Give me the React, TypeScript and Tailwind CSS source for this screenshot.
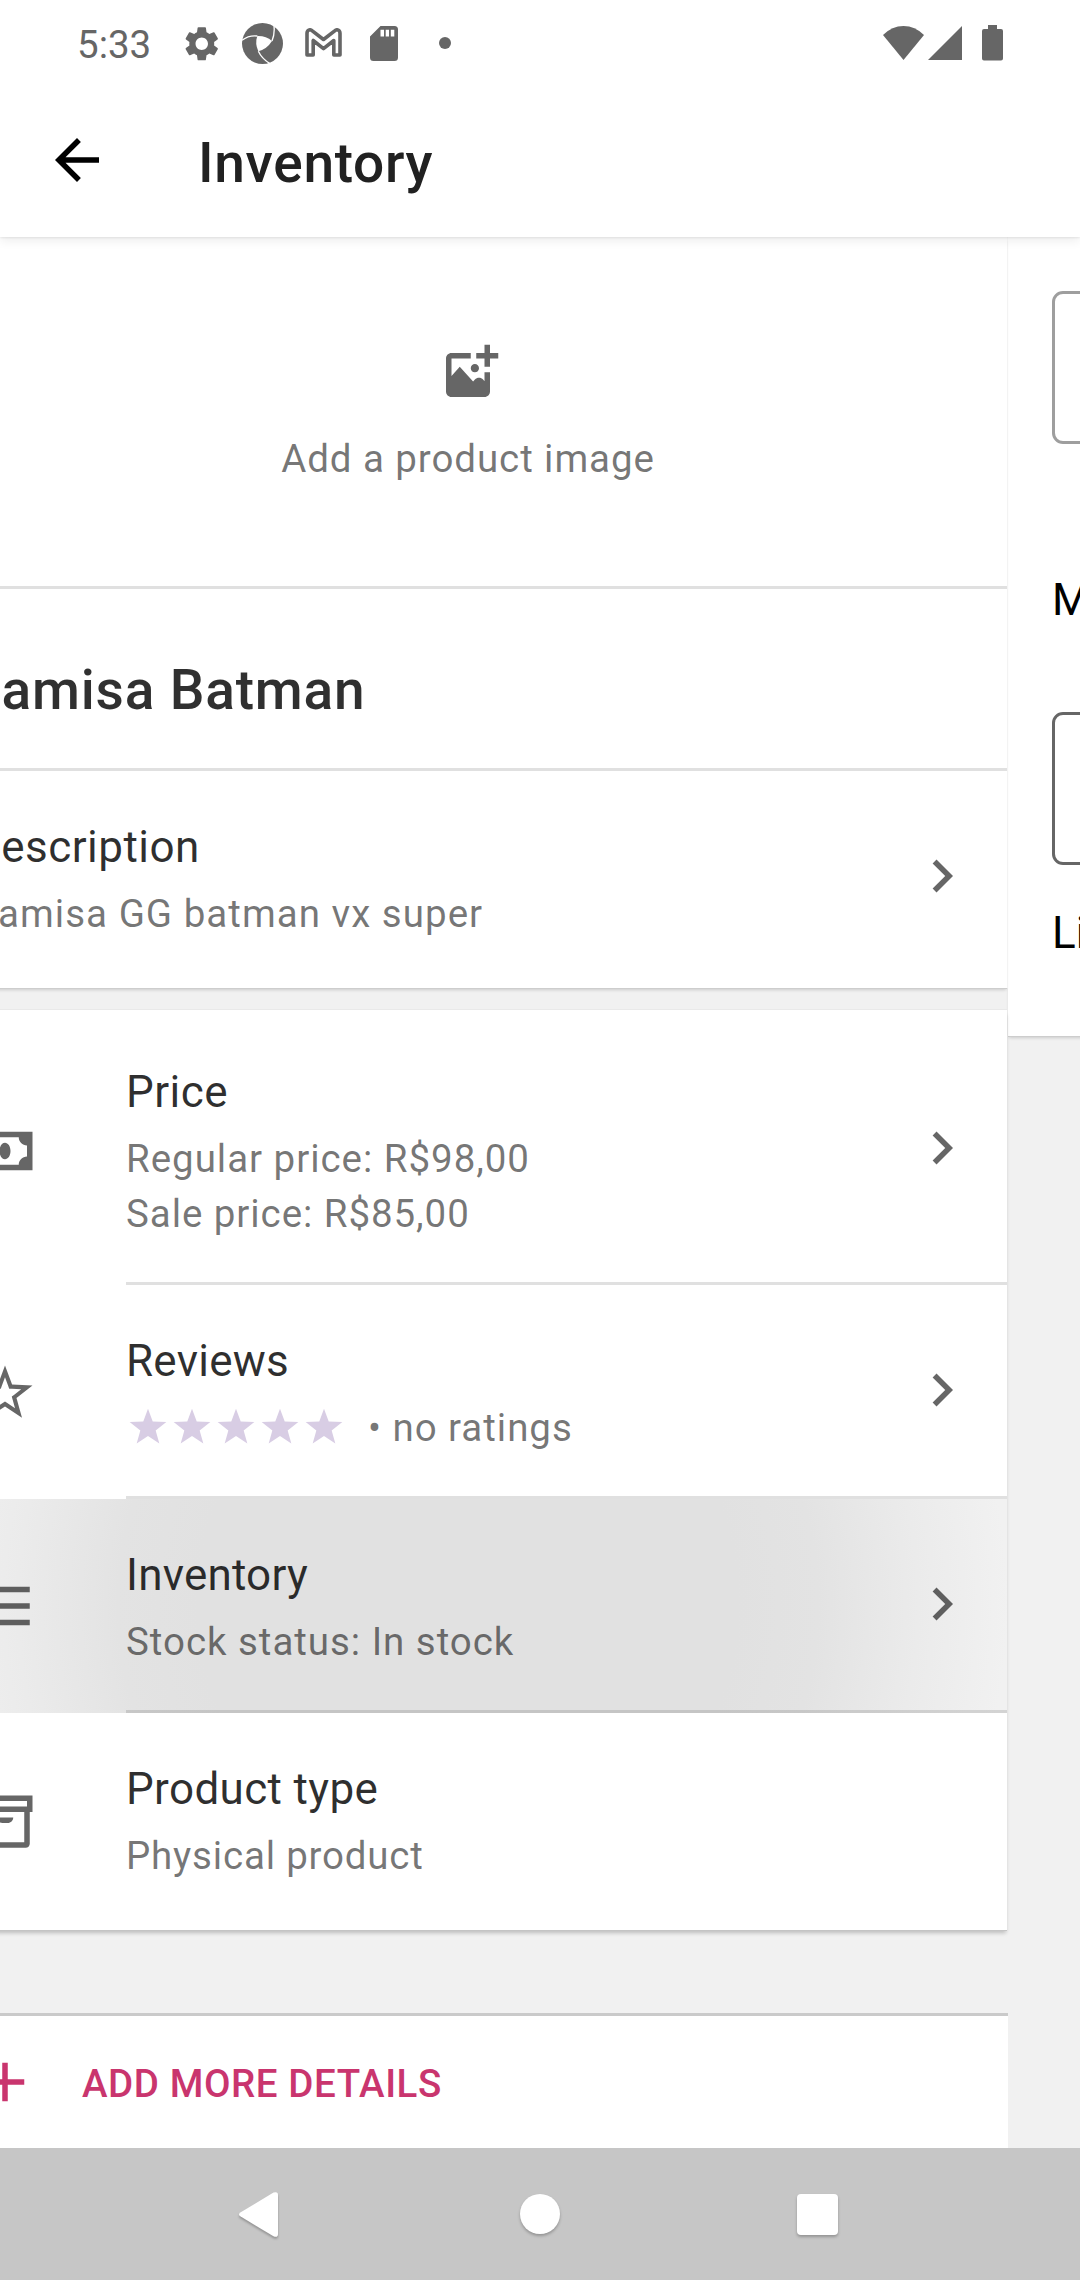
import type { ReactNode } from "react";
import { MdSettings } from "react-icons/md";

type IconProps = { d: string; className?: string };

const PATHS = {
  back: "M20 11H7.83l5.59-5.59L12 4l-8 8 8 8 1.41-1.41L7.83 13H20v-2z",
  chevron: "M10 6L8.59 7.41 13.17 12l-4.58 4.59L10 18l6-6z",
  addImage:
    "M23 4v2h-3v3h-2V6h-3V4h3V1h2v3h3zm-8.5 7c.828 0 1.5-.672 1.5-1.5S15.328 8 14.5 8 13 8.672 13 9.5s.672 1.5 1.5 1.5zm3.5 3.234l-.513-.57c-.794-.885-2.18-.885-2.976 0l-.655.73L9 9l-3 3.333V6h7V4H6c-1.105 0-2 .895-2 2v12c0 1.105.895 2 2 2h12c1.105 0 2-.895 2-2v-7h-2v3.234z",
  money:
    "M2 5v14h20V5H2zm5 12c0-1.657-1.343-3-3-3v-4c1.657 0 3-1.343 3-3h10c0 1.657 1.343 3 3 3v4c-1.657 0-3 1.343-3 3H7zm5-8c1.1 0 2 1.3 2 3s-.9 3-2 3-2-1.3-2-3 .9-3 2-3z",
  starOutline:
    "M12 6.308l1.176 3.167.347.936.997.042 3.374.14-2.647 2.09-.784.62.27.963.91 3.25-2.813-1.872-.83-.553-.83.552-2.814 1.87.91-3.248.27-.962-.783-.62-2.648-2.092 3.374-.14.996-.04.347-.936L12 6.308M12 2L9.418 8.953 2 9.257l5.822 4.602L5.82 21 12 16.89 18.18 21l-2.002-7.14L22 9.256l-7.418-.304L12 2z",
  star: "M12 2l2.582 6.953L22 9.257l-5.822 4.602L18.18 21 12 16.891 5.82 21l2.002-7.141L2 9.257l7.418-.304z",
  list: "M3 5h18v2H3zM3 11h18v2H3zM3 17h18v2H3z",
  box: "M2 2h20v6h-1v11.5c0 .83-.67 1.5-1.5 1.5h-15C3.67 21 3 20.330 3 19.500V8H2V2zm2 2v2h16V4H4zm1 4v11h14V8H5zm4 2h6c0 1.100-.9 2-2 2h-2c-1.100 0-2-.9-2-2z",
  plus: "M11 5h2v6h6v2h-6v6h-2v-6H5v-2h6z",
};

function Icon({ d, className = "" }: IconProps) {
  return (
    <svg viewBox="0 0 24 24" fill="currentColor" fillRule="evenodd" className={`size-[66px] shrink-0 ${className}`}>
      <path d={d} />
    </svg>
  );
}

function StatusBar() {
  return (
    <div className="flex h-[83px] shrink-0 items-start text-[#666]">
      <span className="mt-[22px] ml-[77px] w-[103px] text-[38.5px] leading-[46px]">5:33</span>
      <MdSettings className="mt-[22.500px] ml-px size-[41.500px]" />
      <svg viewBox="0 0 123 123" className="mt-[23px] ml-[19px] size-[41px]" fill="none">
        <circle cx="61.500" cy="61.500" r="61.500" fill="#666" />
        <path d="M46 39Q72 38 90 54Q75 78 49 85Q38 62 46 39Z" fill="#fff" />
        <path d="M46 39Q20 36 0 52M90 54Q100 30 95 0M49 85Q60 108 84 122" stroke="#fff" strokeWidth="4" />
      </svg>
      <svg viewBox="0 0 37 29" className="mt-7 ml-[22px] h-[29px] w-[37px]" fill="none" stroke="currentColor" strokeWidth="3.600" strokeLinejoin="round">
        <path d="M2 27V5.500C2 2 5 .800 7.300 2.800L18.500 11.500L29.700 2.800C32 .800 35 2 35 5.500V27H28.800V12.500L18.500 20.700L8.200 12.500V27Z" />
      </svg>
      <svg viewBox="0 0 28 35" className="mt-[26px] ml-7 h-[35px] w-7">
        <path fillRule="evenodd" fill="currentColor" d="M10.500 0H24.500Q28 0 28 3.500V31.500Q28 35 24.500 35H3.500Q0 35 0 31.500V10.500ZM10.500 3.700V10.500H14V3.700ZM15.700 3.700V10.500H19V3.700ZM20.800 3.700V10.500H24.300V3.700Z" />
      </svg>
      <span className="mt-[37px] ml-[41px] size-3 rounded-full bg-[#666]" />
      <svg viewBox="0 0 41 34" className="mt-[25.500px] ml-auto h-[34px] w-[41px]" fill="currentColor">
        <path d="M0 9Q9 0 20.500 0T41 9L20.500 34Z" />
      </svg>
      <svg viewBox="0 0 34 34" className="mt-[26px] ml-1 size-[34px]" fill="currentColor">
        <path d="M34 0V34H0Z" />
      </svg>
      <svg viewBox="0 0 21 36" className="mt-[25px] mr-[77px] ml-5 h-9 w-[21px]" fill="currentColor">
        <path d="M6 0H15V4H19Q21 4 21 6V33.500Q21 35.500 19 35.500H2Q0 35.500 0 33.500V6Q0 4 2 4H6Z" />
      </svg>
    </div>
  );
}

function Header() {
  return (
    <header className="relative z-10 flex h-[237px] shrink-0 flex-col bg-white shadow-[0_0_3px_rgba(0,0,0,0.14),0_4px_10px_rgba(0,0,0,0.07)]">
      <StatusBar />
      <div className="flex items-start">
        <Icon d={PATHS.back} className="mt-11 ml-11 text-black" />
        <h1 className="mt-[48px] ml-[88px] text-[55px] leading-[64px] font-medium tracking-[0.7px] text-[#212121]">Inventory</h1>
      </div>
    </header>
  );
}

const SUB = "text-[38.5px] leading-[55px] text-black/55";

type RowProps = {
  title: string;
  titleClass?: string;
  icon?: string;
  iconClass?: string;
  className: string;
  chevronClass?: string;
  divider?: boolean;
  children: ReactNode;
};

function Row({ title, titleClass = "tracking-[0.45px]", icon, iconClass = "", className, chevronClass, divider, children }: RowProps) {
  return (
    <div className={`flex items-start ${className}`}>
      {icon && <Icon d={icon} className={`mr-[88px] ml-11 text-black/60 ${iconClass}`} />}
      <div className={`flex flex-1 items-start self-stretch ${icon ? "" : "pl-11"} ${divider ? "border-b-[3px] border-black/12" : ""}`}>
        <div className="flex-1 pt-[50px]">
          <h2 className={`text-[44px] leading-[52px] text-black/81 ${titleClass}`}>{title}</h2>
          <div className="mt-[13px]">{children}</div>
        </div>
        {chevronClass && <Icon d={PATHS.chevron} className={`mr-8 text-black/60 ${chevronClass}`} />}
      </div>
    </div>
  );
}

const CARD = "relative mr-px bg-white";

function ProductPane() {
  return (
    <div className="-ml-[72px] w-[1080px] shrink-0">
      <section className={`${CARD} shadow-[0_1px_0_#cdcdcd,0_3px_3px_-1px_rgba(0,0,0,0.16),1px_0_0_#fafafa]`}>
        <div className="flex h-[349px] flex-col items-center pt-[105px]">
          <Icon d={PATHS.addImage} className="text-[#666]" />
          <p className="mt-[25px] ml-px text-[38.5px] leading-[52px] tracking-[0.92px] text-black/55">Add a product image</p>
        </div>
        <div className="h-[185px] border-y-[3px] border-[#e0e0e0] pt-[69px] pl-11 text-[55px] leading-[64px] font-medium tracking-[0.82px] text-black/81">
          camisa Batman
        </div>
        <Row title="Description" className="h-[217px]" chevronClass="mt-[72px]">
          <p className={`${SUB} tracking-[1.02px]`}>Camisa GG batman vx super</p>
        </Row>
      </section>
      <section className={`${CARD} mt-[22px] shadow-[0_1px_0_#c4c4c4,0_4px_4px_-1px_rgba(0,0,0,0.22),0_-1px_0_#e9e9e9]`}>
        <Row title="Price" icon={PATHS.money} iconClass="mt-[108px]" className="h-[275px] *:last:pt-[6px]" chevronClass="mt-[99px]" divider>
          <p className={`${SUB} tracking-[0.96px]`}>Regular price: R$98,00</p>
          <p className={`${SUB} tracking-[0.93px]`}>Sale price: R$85,00</p>
        </Row>
        <Row title="Reviews" titleClass="tracking-[0.25px]" icon={PATHS.starOutline} iconClass="mt-[75px]" className="h-[214px]" chevronClass="mt-[72px]" divider>
          <div className="flex items-start">
            <div className="mt-[5px] flex text-[#d8cde4]">
              {[0, 1, 2, 3, 4].map((n) => (
                <svg key={n} viewBox="0 0 24 24" fill="currentColor" className="size-11">
                  <path d={PATHS.star} />
                </svg>
              ))}
            </div>
            <p className={`ml-[22px] tracking-[0.96px] ${SUB}`}>• no ratings</p>
          </div>
        </Row>
        <Row
          title="Inventory"
          titleClass="tracking-[0.2px]"
          icon={PATHS.list}
          iconClass="mt-[74px]"
          className="h-[214px] bg-[radial-gradient(circle_at_540px_105px,#e1e1e1_270px,#e3e3e3_350px,#ebebeb_450px,#f1f1f1_540px)]"
          chevronClass="mt-[72px]"
          divider
        >
          <p className={`${SUB} tracking-[0.96px]`}>Stock status: In stock</p>
        </Row>
        <Row title="Product type" titleClass="tracking-[0.35px]" icon={PATHS.box} iconClass="mt-[77px]" className="h-[217px]">
          <p className={`${SUB} tracking-[0.8px]`}>Physical product</p>
        </Row>
      </section>
      <section className="mt-[83px] h-[135px] border-t-[3px] border-[#cacaca] bg-white">
        <div className="flex items-start text-[#c9356e]">
          <Icon d={PATHS.plus} className="mt-[33px] ml-11" />
          <span className="mt-[41px] ml-11 text-[38.5px] leading-[54px] font-medium tracking-[0.58px]">ADD MORE DETAILS</span>
        </div>
      </section>
    </div>
  );
}

function InventoryPane() {
  return (
    <div className="w-[1080px] shrink-0">
      <section className="h-[799px] bg-white px-11 pt-[54px] text-[44px] leading-[52px] text-black shadow-[0_1px_0_#cdcdcd,0_3px_3px_-1px_rgba(0,0,0,0.16)]">
        <div className="h-[153px] rounded-[11px] border-[3px] border-[#9e9e9e]" />
        <p className="mt-[130px]">Manage stock</p>
        <div className="mt-[86px] h-[153px] rounded-[11px] border-[3px] border-[#666]" />
        <p className="mt-[42px]">Limit one per order</p>
      </section>
    </div>
  );
}

function NavBar() {
  return (
    <nav className="relative z-10 flex h-[132px] shrink-0 items-start bg-[#c6c6c6]">
      <svg viewBox="0 0 39 45" className="mt-11 ml-[239px] h-[45px] w-[39px] drop-shadow-[0_2px_1px_rgba(0,0,0,0.25)]">
        <path d="M1.300 20.500L34.500.600Q39-1 39 3V42Q39 46 34.500 44.300L1.300 24.300Q-1.300 22.400 1.300 20.500Z" fill="#fff" />
      </svg>
      <div className="mt-[46px] ml-[242px] size-10 rounded-full bg-white shadow-[0_2px_3px_rgba(0,0,0,0.25)]" />
      <div className="mt-[46px] ml-[237px] size-[41px] rounded-[4px] bg-white shadow-[0_2px_3px_rgba(0,0,0,0.25)]" />
    </nav>
  );
}

export default function App() {
  return (
    <div className="flex h-[2280px] w-[1080px] flex-col overflow-hidden bg-[#f1f1f1] font-['Roboto',sans-serif]">
      <Header />
      <main className="flex h-[1911px] items-start overflow-hidden">
        <ProductPane />
        <InventoryPane />
      </main>
      <NavBar />
    </div>
  );
}
